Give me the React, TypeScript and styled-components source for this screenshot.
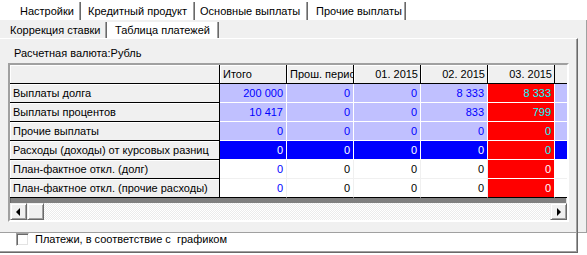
import React from 'react';
import styled, { createGlobalStyle, css } from 'styled-components';

const GlobalStyle = createGlobalStyle`
  html, body { margin: 0; padding: 0; background: #fff; }
  body {
    font-family: "Liberation Sans", Arial, sans-serif;
    font-size: 11px;
    color: #000;
  }
`;

const Window = styled.div`
  width: 587px;
  height: 255px;
  overflow: hidden;
  background: #fff;
`;

const TabStrip = styled.div<{ $height: number; $offset: number; $bg: string }>`
  display: flex;
  height: ${(p) => p.$height}px;
  padding-left: ${(p) => p.$offset}px;
  background: ${(p) => p.$bg};
`;

const Tab = styled.div<{ $w: number; $pad: number; $active?: boolean }>`
  width: ${(p) => p.$w}px;
  padding-left: ${(p) => p.$pad}px;
  box-sizing: border-box;
  display: flex;
  align-items: center;
  white-space: nowrap;
  border-right: 1px solid #696969;
  box-shadow: inset -1px 0 #a0a0a0;
  background: ${(p) => (p.$active ? '#fff' : 'transparent')};
  margin-top: 2px;
`;

const OuterPage = styled.div`
  height: 213px;
  width: 587px;
  box-sizing: border-box;
  background: #f0f0f0;
  border-right: 1px solid #a0a0a0;
  border-bottom: 1px solid #a0a0a0;
`;

const InnerControl = styled.div`
  width: 578px;
  height: 233px;
  display: flex;
  flex-direction: column;
`;

const Page = styled.div`
  flex: 1;
  display: flex;
  flex-direction: column;
  box-sizing: border-box;
  border-top: 1px solid #fff;
  border-right: 1px solid #696969;
  border-bottom: 1px solid #696969;
  box-shadow: inset -1px -1px #a0a0a0;
  padding: 7px 0 0 8px;
`;

const Caption = styled.div`
  height: 14px;
  line-height: 14px;
  padding-left: 6px;
  margin-bottom: 3px;
`;

const GridBox = styled.div`
  width: 561px;
  box-sizing: border-box;
  border: 2px solid;
  border-color: #a0a0a0 #fff #fff #a0a0a0;
  box-shadow: inset 1px 1px #696969, inset -1px -1px #e3e3e3;
  display: flex;
  flex-direction: column;
  background: #808080;
`;

const Row = styled.div`
  display: flex;
  height: 19px;
`;

type Tone = 'lav' | 'blue' | 'red' | 'white';

const toneBg: Record<Tone, string> = {
  lav: '#c0c0ff',
  blue: '#0000ff',
  red: '#ff0000',
  white: '#ffffff',
};

const FixedCell = styled.div<{ $w: number; $align?: 'left' | 'right'; $noLine?: boolean }>`
  width: ${(p) => p.$w}px;
  flex: none;
  box-sizing: border-box;
  background: #f0f0f0;
  ${(p) =>
    p.$noLine
      ? css`border-bottom: 1px solid #000;`
      : css`
          border-right: 1px solid #000;
          border-bottom: 1px solid #000;
          box-shadow: inset 1px 1px #fff;
        `}
  line-height: 18px;
  padding: ${(p) => (p.$align === 'right' ? '0 2px 0 0' : '0 0 0 3px')};
  text-align: ${(p) => p.$align ?? 'left'};
  white-space: nowrap;
  overflow: hidden;
`;

const DataCell = styled.div<{ $w: number; $tone: Tone; $color: string; $last?: boolean; $noRight?: boolean }>`
  width: ${(p) => p.$w}px;
  flex: none;
  box-sizing: border-box;
  background: ${(p) => toneBg[p.$tone]};
  color: ${(p) => p.$color};
  border-right: ${(p) => (p.$noRight ? '0' : '1px solid')};
  border-bottom: 1px solid;
  border-color: ${(p) => (p.$tone === 'white' ? '#f0f0f0' : '#fff')};
  ${(p) => p.$last && css`border-bottom-color: #000;`}
  line-height: 18px;
  padding-right: 3px;
  text-align: right;
  white-space: nowrap;
  overflow: hidden;
`;

const Band = styled.div`
  height: 5px;
`;

const ScrollBar = styled.div`
  display: flex;
  height: 17px;
  background: repeating-conic-gradient(#fff 0 25%, #ebebeb 0 50%) 0 0 / 2px 2px;
`;

const ScrollButton = styled.div`
  width: 17px;
  height: 17px;
  box-sizing: border-box;
  background: #f0f0f0;
  border: 1px solid;
  border-color: #f0f0f0 #696969 #696969 #f0f0f0;
  box-shadow: inset 1px 1px #fff, inset -1px -1px #a0a0a0;
  display: flex;
  align-items: center;
  justify-content: center;
`;

const Track = styled.div`
  flex: 1;
`;

const Arrow = styled.div<{ $dir: 'left' | 'right' }>`
  width: 0;
  height: 0;
  border-top: 4px solid transparent;
  border-bottom: 4px solid transparent;
  ${(p) =>
    p.$dir === 'left'
      ? css`border-right: 4px solid #000; margin-left: -1px;`
      : css`border-left: 4px solid #000; margin-left: 1px;`}
`;

const CheckRow = styled.label`
  display: flex;
  align-items: center;
  gap: 6px;
  margin: 11px 0 0 8px;
  height: 13px;
  line-height: 13px;
`;

const CheckBox = styled.span`
  width: 13px;
  height: 13px;
  box-sizing: border-box;
  background: #fff;
  border: 1px solid;
  border-color: #a0a0a0 #fff #fff #a0a0a0;
  box-shadow: inset 1px 1px #696969, inset -1px -1px #e3e3e3;
`;

const LABEL_W = 210;
const COL_W = 67;
const TAIL_W = 12;

const headers = ['Итого', 'Прош. периоды', '01. 2015', '02. 2015', '03. 2015'];

type RowSpec = { label: string; tone: Tone; values: string[] };

const rows: RowSpec[] = [
  { label: 'Выплаты долга', tone: 'lav', values: ['200 000', '0', '0', '8 333', '8 333'] },
  { label: 'Выплаты процентов', tone: 'lav', values: ['10 417', '0', '0', '833', '799'] },
  { label: 'Прочие выплаты', tone: 'lav', values: ['0', '0', '0', '0', '0'] },
  { label: 'Расходы (доходы) от курсовых разниц', tone: 'blue', values: ['0', '0', '0', '0', '0'] },
  { label: 'План-фактное откл. (долг)', tone: 'white', values: ['0', '0', '0', '0', '0'] },
  { label: 'План-фактное откл. (прочие расходы)', tone: 'white', values: ['0', '0', '0', '0', '0'] },
];

function textColor(tone: Tone, col: number, rowIdx: number) {
  if (col === 4) return rowIdx < 4 ? '#00ffff' : '#fff';
  if (tone === 'lav') return '#0000ff';
  if (tone === 'blue') return '#fff';
  return col === 0 ? '#0000ff' : '#000';
}

export default function App() {
  return (
    <Window>
      <GlobalStyle />
      <TabStrip $height={20} $offset={13} $bg="#fff">
        <Tab $w={68} $pad={7}>Настройки</Tab>
        <Tab $w={114} $pad={7}>Кредитный продукт</Tab>
        <Tab $w={113} $pad={5}>Основные выплаты</Tab>
        <Tab $w={98} $pad={8} $active>Прочие выплаты</Tab>
      </TabStrip>
      <OuterPage>
        <InnerControl>
          <TabStrip $height={18} $offset={0} $bg="#f0f0f0">
            <Tab $w={107} $pad={10}>Коррекция ставки</Tab>
            <Tab $w={112} $pad={8} $active>Таблица платежей</Tab>
          </TabStrip>
          <Page>
            <Caption>Расчетная валюта:Рубль</Caption>
            <GridBox>
              <Row>
                <FixedCell $w={LABEL_W} />
                {headers.map((h, i) => (
                  <FixedCell key={h} $w={COL_W} $align={i < 2 ? 'left' : 'right'}>
                    {h}
                  </FixedCell>
                ))}
                <FixedCell $w={TAIL_W} $noLine />
              </Row>
              {rows.map((r, ri) => (
                <Row key={r.label}>
                  <FixedCell $w={LABEL_W}>{r.label}</FixedCell>
                  {r.values.map((v, ci) => (
                    <DataCell
                      key={ci}
                      $w={COL_W}
                      $tone={ci === 4 ? 'red' : r.tone}
                      $color={textColor(r.tone, ci, ri)}
                      $last={ri === rows.length - 1}
                    >
                      {v}
                    </DataCell>
                  ))}
                  <DataCell $w={TAIL_W} $tone={r.tone} $color="#000" $last={ri === rows.length - 1} $noRight />
                </Row>
              ))}
              <Band />
              <ScrollBar>
                <ScrollButton>
                  <Arrow $dir="left" />
                </ScrollButton>
                <ScrollButton />
                <Track />
                <ScrollButton>
                  <Arrow $dir="right" />
                </ScrollButton>
              </ScrollBar>
            </GridBox>
            <CheckRow>
              <CheckBox />
              <span>Платежи, в соответствие с&nbsp; графиком</span>
            </CheckRow>
          </Page>
        </InnerControl>
      </OuterPage>
    </Window>
  );
}
